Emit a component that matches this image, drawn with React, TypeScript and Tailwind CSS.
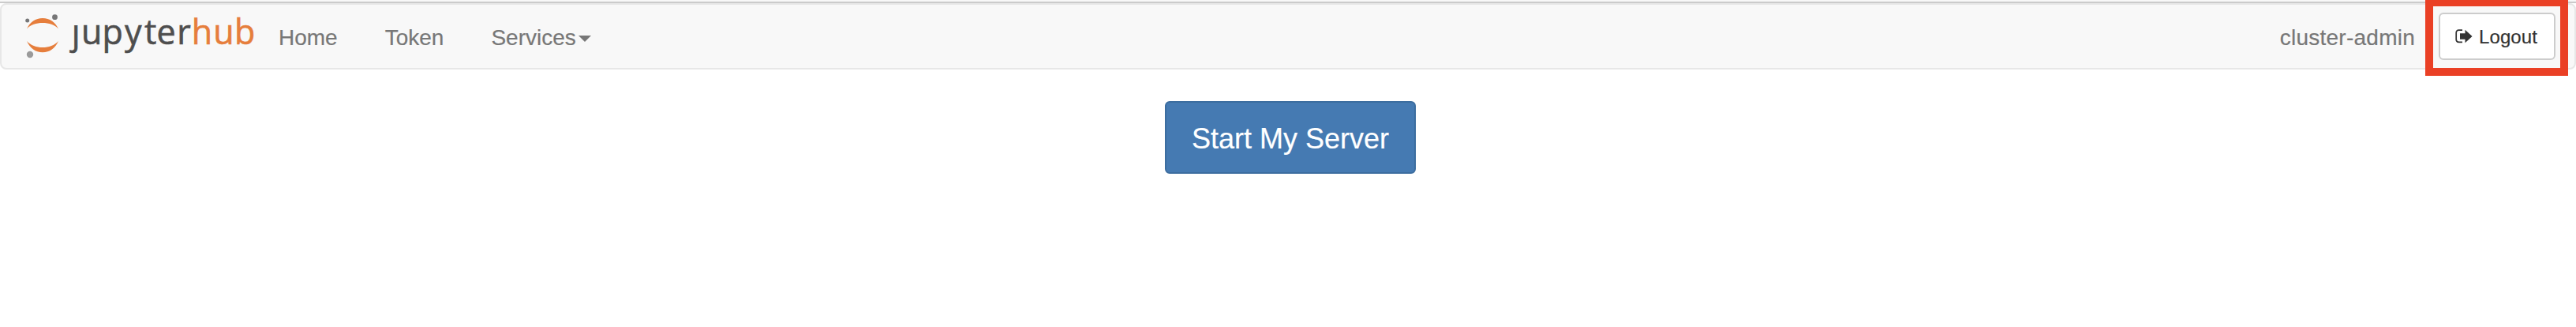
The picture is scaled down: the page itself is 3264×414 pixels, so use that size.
import React from "react";

function Logo() {
  return (
    <svg className="block h-[80px] w-[328px] shrink-0" viewBox="2 6 328 80" role="img" aria-label="jupyterhub">
      <defs>
        <clipPath id="stem">
          <rect x="80" y="32" width="25" height="40" />
        </clipPath>
      </defs>
      <path d="M34 36.500C38 28 45 23 54 23s16 5 20 13.500C69 31 62 29 54 29s-15 2-20 7.500z" fill="#e67e3c" />
      <path d="M34 52C39 57.500 46 60 54 60s15-2.500 20-8C70 61 63 66.300 54 66.300S38 61 34 52z" fill="#e67e3c" />
      <circle cx="34.700" cy="26" r="2.500" fill="#767677" />
      <circle cx="69.500" cy="21.700" r="3.400" fill="#767677" />
      <circle cx="38" cy="69" r="4.200" fill="#9b9b9b" />
      <g
        fontFamily="'Open Sans', 'Noto Sans', sans-serif"
        fontSize="43"
        fill="#4e4e4e"
        stroke="#4e4e4e"
        strokeWidth="0.6"
      >
        <text x="90.800" y="55.500" clipPath="url(#stem)">j</text>
        <text x="103 129.500 158 183 198.500 224.200" y="55.500">upyter</text>
        <text x="242.700 270.200 297" y="55.500" fill="#e67e3c" stroke="#e67e3c">hub</text>
      </g>
    </svg>
  );
}

function SignOutIcon() {
  return (
    <svg className="h-[18px] w-[22px] shrink-0" viewBox="0 0 22 18" fill="#333">
      <path d="M9 1.200H4.500Q1.200 1.200 1.200 4.500v8.500Q1.200 16.300 4.500 16.300H9" fill="none" stroke="#333" strokeWidth="1.700" />
      <path d="M6 5.200h6.500V0.700L21.500 9l-9 8.300v-4.500H6z" />
    </svg>
  );
}

export default function App() {
  return (
    <div className="h-[414px] w-full overflow-hidden bg-white font-['Liberation_Sans',Arial,sans-serif] [-webkit-text-stroke:0.2px]">
      <div className="h-1 border-b-2 border-[#cbcbcb] bg-[#f8f8f8]" />
      <nav className="flex h-[84px] items-center rounded-lg border-2 border-[#e7e7e7] bg-[#f8f8f8] text-[28px] leading-10 text-[#777]">
        <Logo />
        <a className="ml-[23px] pt-[3px]">Home</a>
        <a className="ml-[60px] pt-[3px]">Token</a>
        <a className="ml-[60px] flex items-center pt-[3px]">
          Services
          <span className="ml-[3px] mt-[3px] border-x-8 border-t-8 border-x-transparent border-t-[#777]" />
        </a>
        <span className="ml-auto pt-[3px] tracking-[0.25px]">cluster-admin</span>
        <div className="relative top-px ml-[13px] mr-2 flex h-[98px] w-[181px] shrink-0 items-center justify-center border-10 border-[#ea4025] pb-[2px]">
          <button className="flex h-[60px] w-[148px] items-center justify-center gap-2 rounded-md border-2 border-[#ccc] bg-white pr-px text-2xl text-[#333]">
            <SignOutIcon />
            <span className="pt-[2px] tracking-[0.1px]">Logout</span>
          </button>
        </div>
      </nav>
      <main className="flex pt-10 pl-[1476px]">
        <button className="h-[92px] w-[318px] rounded-md border-2 border-[#3c6d9f] bg-[#457ab2] pt-[3px] text-4xl text-white">
          Start My Server
        </button>
      </main>
    </div>
  );
}
